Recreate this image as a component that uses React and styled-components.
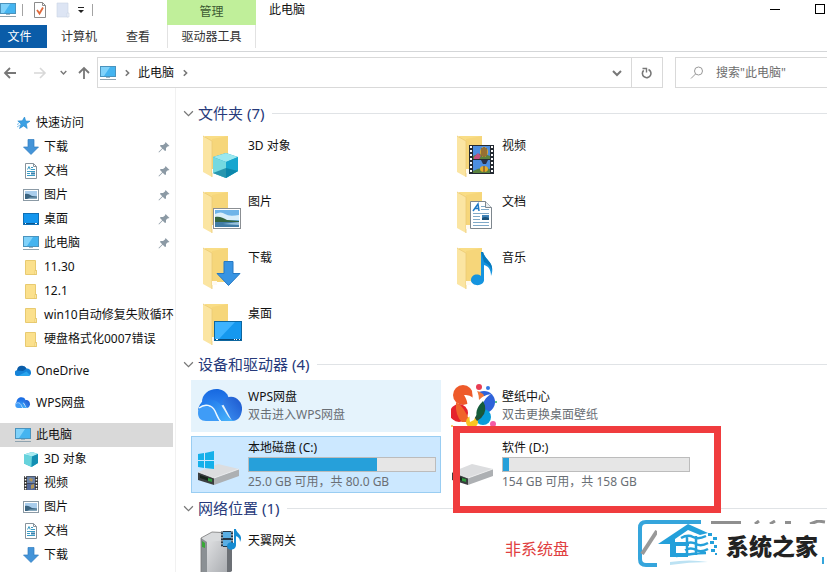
import React from "react";
import styled, { createGlobalStyle } from "styled-components";

const GlobalStyle = createGlobalStyle`
  * {
    box-sizing: border-box;
  }
  body {
    margin: 0;
    background: #fff;
    color: #111;
    font: 12px/18px "Noto Sans", "Noto Sans CJK SC", sans-serif;
  }
  button,
  input {
    font: inherit;
    color: inherit;
    border: 0;
    padding: 0;
    background: none;
  }
  a {
    color: inherit;
    text-decoration: none;
  }
  svg {
    display: block;
    flex: none;
  }
`;

const Window = styled.div`
  position: relative;
  display: flex;
  flex-direction: column;
  height: 100vh;
  overflow: hidden;
`;

/* ---------- header ---------- */

const Ribbon = styled.header`
  display: flex;
  align-items: stretch;
  height: 52px;
  border-bottom: 1px solid #d4d6d8;
`;

const RibbonLeft = styled.div`
  display: flex;
  flex-direction: column;
  width: 167px;
`;

const QuickBar = styled.div`
  display: flex;
  align-items: center;
  height: 25px;
  padding-bottom: 6px;
`;

const QuickButton = styled.button`
  width: ${(p) => p.$width || 22}px;
  display: flex;
  justify-content: ${(p) => p.$align || "center"};
`;

const Separator = styled.span`
  width: 1px;
  height: 12px;
  background: #a3a3a3;
`;

const Tabs = styled.div`
  display: flex;
  height: 23px;
`;

const Tab = styled.button`
  width: ${(p) => p.$width}px;
  height: 23px;
  padding: 1px 0 0;
  background: ${(p) => (p.$active ? "#0a5ca8" : "transparent")};
  color: ${(p) => (p.$active ? "#fff" : "#333")};
  text-align: center;
  white-space: nowrap;
`;

const FileTab = styled(Tab)`
  padding-right: 8px;
`;

const ToolTab = styled.div`
  display: flex;
  flex-direction: column;
  width: 89px;
`;

const ToolTitle = styled.div`
  height: 25px;
  padding-top: 3px;
  background: #c0ef9a;
  color: #3c5a32;
  text-align: center;
`;

const ToolButton = styled(Tab)`
  width: auto;
  border: solid #e2e2e2;
  border-width: 0 1px;
`;

const Title = styled.h1`
  flex: 1;
  margin: 0;
  padding: 1px 13px;
  font-size: 12px;
  line-height: 18px;
  font-weight: 400;
`;

const WindowButtons = styled.div`
  display: flex;
  align-items: flex-start;
  gap: 35px;
  padding: 4px 2px;
`;

const NavBar = styled.nav`
  display: flex;
  align-items: center;
  padding-top: 5px;
  height: 36px;
`;

const NavButtons = styled.div`
  display: flex;
  align-items: center;
  justify-content: space-between;
  width: 97px;
  padding: 0 6px 0 3px;
`;

const NavButton = styled.button`
  display: flex;
`;

const NavPair = styled.div`
  display: flex;
  align-items: center;
  gap: ${(p) => p.$gap}px;
`;

const AddressBar = styled.div`
  display: flex;
  align-items: center;
  flex: 1;
  height: 31px;
  border: 1px solid #d9d9d9;
  padding-left: 2px;
`;

const Crumbs = styled.div`
  display: flex;
  align-items: center;
  flex: 1;
  gap: 7px;
`;

const AddressButton = styled.button`
  display: flex;
  align-items: center;
  justify-content: center;
  width: ${(p) => (p.$divided ? 31 : 29)}px;
  height: 29px;
  border-left: ${(p) => (p.$divided ? "1px solid #d9d9d9" : "0")};
`;

const SearchBox = styled.label`
  display: flex;
  align-items: center;
  gap: 12px;
  width: 152px;
  height: 31px;
  margin-left: 12px;
  padding-left: 14px;
  border: 1px solid #d9d9d9;
  border-right: 0;
`;

const SearchInput = styled.input`
  flex: 1;
  min-width: 0;
  outline: none;
  &::placeholder {
    color: #6d6d6d;
    opacity: 1;
  }
`;

/* ---------- side tree ---------- */

const Main = styled.div`
  display: flex;
  flex: 1;
  min-height: 0;
`;

const Sidebar = styled.aside`
  width: 176px;
  padding: 23px 2px 0 0;
  border-right: 1px solid #f1f1f1;
  overflow: hidden;
`;

const TreeGroup = styled.div`
  margin-bottom: 8px;
`;

const TreeLink = styled.a`
  display: flex;
  align-items: center;
  gap: 5px;
  height: 24px;
  padding: 0 3px 1px ${(p) => (p.$root ? 15 : 23)}px;
  background: ${(p) => (p.$selected ? "#d9d9d9" : "transparent")};
  white-space: nowrap;
`;

const TreeText = styled.span`
  flex: 1;
`;

/* ---------- content ---------- */

const Content = styled.main`
  flex: 1;
  min-width: 0;
  padding: 14px 0 0 7px;
`;

const SectionTitle = styled.h2`
  display: flex;
  align-items: center;
  gap: 4px;
  height: 22px;
  margin: 0 0 5px;
  color: #26397a;
  font-size: 15px;
  font-weight: 400;
  &::after {
    content: "";
    flex: 1;
    height: 1px;
    margin-left: 4px;
    background: #e0e3e6;
  }
`;

const Tiles = styled.div`
  display: grid;
  grid-template-columns: repeat(auto-fill, 250px);
  gap: 4px;
  padding-left: 8px;
  margin-bottom: 4px;
`;

const Tile = styled.a`
  position: relative;
  display: flex;
  gap: 3px;
  height: ${(p) => (p.$drive ? 57 : 52)}px;
  padding: ${(p) => (p.$drive ? 2 : 7)}px 4px 0 5px;
  border: 1px solid ${(p) => (p.$selected ? "#99cdf2" : "transparent")};
  background: ${(p) =>
    p.$selected ? "#cce8ff" : p.$hover ? "#e5f3fc" : "transparent"};
`;

const TileIcon = styled.span`
  flex: none;
  width: 48px;
  height: 48px;
  margin-top: ${(p) => (p.$drive ? 3 : -6)}px;
`;

const TileText = styled.div`
  flex: 1;
  min-width: 0;
`;

const Muted = styled.div`
  color: #6a6f75;
  white-space: nowrap;
`;

const Meter = styled.div`
  height: 15px;
  margin-bottom: 1px;
  border: 1px solid #bcbcbc;
  background: #e6e6e6;
`;

const MeterFill = styled.div`
  height: 13px;
  background: #26a0da;
`;

const Callout = styled.div`
  position: absolute;
  top: -11px;
  right: -27px;
  bottom: -21px;
  left: 7px;
  border: 7px solid #f03c3e;
`;

const CalloutText = styled.div`
  position: absolute;
  top: 106px;
  left: 45px;
  color: #e04040;
  font-size: 16px;
  line-height: 20px;
  white-space: nowrap;
`;

const Watermark = styled.div`
  position: absolute;
  right: 0;
  bottom: 4px;
  width: 190px;
  height: 48px;
`;

const WatermarkCard = styled.div`
  position: absolute;
  top: 4px;
  left: 20px;
  right: 5px;
  bottom: 0;
  display: flex;
  align-items: center;
  background: #fff;
`;

const Brand = styled.strong`
  color: #222;
  font-size: 23px;
  line-height: 30px;
  font-weight: 900;
  white-space: nowrap;
`;

/* ---------- small icons ---------- */

const Svg = ({ size = 16, box = 16, children }) => (
  <svg width={size} height={size} viewBox={`0 0 ${box} ${box}`} aria-hidden="true">
    {children}
  </svg>
);

const PcIcon = () => (
  <Svg>
    <rect x=".5" y="1.500" width="15" height="10" fill="#44b4f0" stroke="#4a93bd" />
    <path d="M1 2h9L4 11H1z" fill="#80d2fa" />
    <path d="M6 12h4v1H6z" fill="#9cb6c4" />
    <path d="M0 14.500h16" stroke="#8fa3af" />
  </Svg>
);

const StarIcon = () => (
  <Svg>
    <path d="M9.500 2l1.200 4 4.300.2-3.700 2.600.9 4.700-3.500-2.600-4.200 2.600 1.500-4.600L2.800 6l4.500-.2z" fill="#3aa0e4" stroke="#2287cc" strokeWidth=".6" />
    <path d="M2 12l3-2M2 9.500l2-1" stroke="#7fc1ee" />
  </Svg>
);

const DownIcon = () => (
  <Svg>
    <path d="M5 .5h6V8h4.500L8 15.500.5 8H5z" fill="#4494d8" stroke="#2f7cc0" strokeWidth=".7" />
  </Svg>
);

const DocIcon = () => (
  <Svg>
    <path d="M2.500.5h8l3 3v12h-11z" fill="#fff" stroke="#87939c" />
    <path d="M10.500.5v3h3" fill="none" stroke="#87939c" />
    <path d="M4.500 6.500L6 3.500l1.200 3M8 4.500h2M8 6.500h4M4 8.500h8M4 10.500h3M4 12.500h8" stroke="#3a9bc4" fill="none" />
    <path d="M8 9.500h4v2H8z" fill="#3a82b0" />
  </Svg>
);

const PictureIcon = () => (
  <Svg>
    <rect x=".5" y="2.500" width="15" height="11" fill="#fff" stroke="#8b9aa5" />
    <path d="M2 4h12v8H2z" fill="#a9cdec" />
    <path d="M2 7c3-1 5 1 7 2l5 .5V12H2z" fill="#3b6480" />
    <path d="M7 10.500h7V12H4z" fill="#87a9be" />
  </Svg>
);

const DesktopIcon = () => (
  <Svg>
    <rect x=".5" y="2.500" width="15" height="11" fill="#1496ee" stroke="#0f6fb5" />
    <path d="M1 12.500h14" stroke="#0b568e" />
    <path d="M2 12.500h1M12 12.500h2" stroke="#fff" />
  </Svg>
);

const FolderIcon = () => (
  <Svg>
    <path d="M2.500 1.500h10v10h1v4h-11z" fill="#fbe08c" stroke="#e8ca70" />
    <path d="M12 11.500h1.500v4H12z" fill="#fff0b8" stroke="#dcb850" strokeWidth=".5" />
  </Svg>
);

const CloudIcon = () => (
  <Svg>
    <path d="M3 13a3 3 0 01-.5-6A5 5 0 0111.500 5.500 4 4 0 0116 9.500 3 3 0 0113 13z" fill="#1583d8" />
    <path d="M2 7.500A5 5 0 0111.500 5.500L8 8z" fill="#0a5ca8" />
    <path d="M3 13l8.500-4.500L15 12q-1 1-2 1z" fill="#29a5ee" />
  </Svg>
);

const CubeIcon = () => (
  <Svg>
    <path d="M1 3.500L9 1l6 2v9l-6.500 4L1 12.500z" fill="#35b5cf" />
    <path d="M1 3.500L9 1l6 2-6 2.500z" fill="#a8ebf1" />
    <path d="M1 3.500l8 2-.5 10.500L1 12.500z" fill="#67d3dc" />
    <path d="M9 5.500L15 3v9l-6.500 4z" fill="#128fb3" />
  </Svg>
);

const VideoIcon = () => (
  <Svg>
    <path d="M1 1h14v14H1z" fill="#333" />
    <path d="M4 1.500h8V8H4z" fill="#6981a8" />
    <path d="M4 8.500h8V15H4z" fill="#52689a" />
    <path d="M7 3l3 1-1 3-3-2zM8 10l3-1v4l-3 1z" fill="#b49758" />
    <path d="M2.500 1v14M13.500 1v14" stroke="#fff" strokeWidth="1.500" strokeDasharray="1.500 1.500" />
  </Svg>
);

const PinIcon = () => (
  <Svg size={12} box={12}>
    <path d="M7.500 1l4 4-2 .5L8 7v2.500l-1 .5-2.300-2.300L1 11.500l-.5-.5 3.700-3.800L2 5l.5-1H5l2-1.500z" fill="#8c9aa5" />
  </Svg>
);

const WpsCloud = ({ size = 48 }) => (
  <Svg size={size} box={48}>
    <defs>
      <linearGradient id="wpsBack" x1="0" y1="0" x2="0" y2="1">
        <stop offset="0" stopColor="#1668e0" />
        <stop offset="1" stopColor="#2f86f2" />
      </linearGradient>
      <linearGradient id="wpsBand" x1="0" y1="0" x2="1" y2="1">
        <stop offset="0" stopColor="#1d74ea" />
        <stop offset="1" stopColor="#4ab6fc" />
      </linearGradient>
      <linearGradient id="wpsSide" x1="1" y1="0" x2="0" y2="1">
        <stop offset="0" stopColor="#1c55cc" />
        <stop offset="1" stopColor="#3d95f5" />
      </linearGradient>
    </defs>
    <path d="M5 21C4 6 26 2 31 14l2 6-14 6z" fill="url(#wpsBack)" />
    <path d="M25 20C33 9 46 17 45 28c-1 7-4 11-10 11z" fill="url(#wpsSide)" />
    <path d="M1 30C1 17 15 14 22 23c5 6 7 14 14 16H25c-6-2-7-14-14-16-5 0-9 3-10 7z" fill="url(#wpsBand)" />
    <path d="M4 21c10-6 17-3 22 5 4 6 6 12 12 13H24L12 23z" fill="url(#wpsBand)" />
    <path d="M1 31c0-9 12-10 16-3 2 4 3 8 6 11H9c-5 0-8-3-8-8z" fill="#3f9cf7" />
    <path d="M2 26c6-5 13-3 16 3 2 4 3 8 6 11" fill="none" stroke="#eff8ff" strokeWidth="1.500" />
  </Svg>
);

/* ---------- large icons ---------- */

const FolderLarge = ({ children }) => (
  <Svg size={48} box={48}>
    <path d="M8 5h23v34H14z" fill="#f9dd86" />
    <path d="M15 8l16-3v34H15z" fill="#f6d67a" />
    <path d="M6 5l9 5v36l-9-5z" fill="#fbe5a2" />
    <path d="M6 5l9 5v36" fill="none" stroke="#ecca74" strokeWidth=".8" />
    <path d="M15 38h5v4h-5z" fill="#fffaf0" />
    {children}
  </Svg>
);

const CubeLarge = () => (
  <FolderLarge>
    <path d="M16 26l13-4 12 4v14l-12 7-13-5z" fill="#1fa7c5" />
    <path d="M16 26l13-4 12 4-12 5z" fill="#9be8ef" />
    <path d="M16 26l13 5v16l-13-5z" fill="#74d9e0" />
    <path d="M29 31l12-5v14l-12 7z" fill="#16a6cf" />
    <path d="M16 42l13-5 12 3-12 7z" fill="#08799a" opacity=".7" />
  </FolderLarge>
);

const PictureLarge = () => (
  <FolderLarge>
    <rect x="16.500" y="21.500" width="27" height="20" fill="#fff" stroke="#8b8f93" />
    <path d="M18 23h24v17H18z" fill="#6fb4e8" />
    <path d="M18 27q6-3 10 0t14 1v5H18z" fill="#d9eefa" />
    <path d="M18 30c5-1 8 1 12 3l12 1v2H18z" fill="#35653f" />
    <path d="M18 35h24v5H18z" fill="#417ca5" />
    <path d="M26 37l16-2v3z" fill="#9bc4dd" />
  </FolderLarge>
);

const DownLarge = () => (
  <FolderLarge>
    <path d="M27 18.500h9v12h7L31.500 42.500 20 30.500h7z" fill="#3894e3" stroke="#2679c3" />
  </FolderLarge>
);

const DesktopLarge = () => (
  <FolderLarge>
    <rect x="17.500" y="22.500" width="27" height="19" fill="#1598ef" stroke="#0d669f" />
    <path d="M18 23h20L22 40h-4z" fill="#3db3ff" />
    <path d="M18 40.500h26" stroke="#084b7e" />
    <path d="M19 40.500h2M37 40.500h1M39 40.500h1M42 40.500h1" stroke="#fff" />
  </FolderLarge>
);

const VideoLarge = () => (
  <FolderLarge>
    <path d="M18 14h25v29H18z" fill="#242a32" />
    <path d="M22 15h17v13H22zM22 29h17v13H22z" fill="#4c8ee0" />
    <path d="M22 25q8-5 17 0v3H22zM22 40q8-5 17-2v4H22z" fill="#5a813e" />
    <path d="M23 26l4-4 3 3-2 3h-5z" fill="#c44f80" />
    <ellipse cx="33" cy="21" rx="4" ry="5" fill="#dca52a" />
    <path d="M33 16v10M31 17v8M35 17v8" stroke="#503b3c" />
    <path d="M30 29h7l-2 4h-3z" fill="#29314c" />
    <ellipse cx="33" cy="38" rx="4" ry="3" fill="#e6ad29" />
    <path d="M33 35v6" stroke="#503b3c" />
    <path d="M20 15v28M41 15v28" stroke="#fff" strokeWidth="2" strokeDasharray="2 2" />
  </FolderLarge>
);

const DocLarge = () => (
  <FolderLarge>
    <path d="M19.500 14.500h15l6 6v21h-21z" fill="#fff" stroke="#7e878e" />
    <path d="M34.500 14.500v6h6" fill="#e9edf0" stroke="#7e878e" />
    <path d="M22 24l5-7 1 7M24 21.500h4" stroke="#1f79c5" fill="none" strokeWidth="1.500" />
    <path d="M30 19.500h4M30 22.500h8M22 26.500h16M22 29.500h7M22 32.500h7M22 35.500h16M22 38.500h16" stroke="#7fa9c8" />
    <path d="M31 28h7v5h-7z" fill="#4183b7" />
    <path d="M31 31q3-2 7 0v2h-7z" fill="#1c5279" />
  </FolderLarge>
);

const MusicLarge = () => (
  <FolderLarge>
    <path d="M30 9h2c2 8 13 11 8 24 0-7-3-10-7-11v14c1 8-13 8-13 1 0-5 6-7 10-4z" fill="#1594df" />
    <path d="M30 9h2c2 8 10 10 9 18-2-5-6-7-8-8z" fill="#087abd" />
  </FolderLarge>
);

const DriveLarge = ({ windows }) => (
  <Svg size={48} box={48}>
    <path d="M1 30l20-8 21 5-25 9z" fill="#dcdddf" />
    <path d="M1 30l16 6v7L1 38z" fill="#3b3e40" />
    <path d="M17 36l25-9v7l-25 9z" fill="#adb0b3" />
    <path d="M1 30l16 6 25-9" fill="none" stroke="#f3f3f3" strokeWidth=".8" />
    <path d="M3 33l12 4v3L3 36z" fill="#17231b" />
    <path d="M11 36l4 1v3l-4-1z" fill="#2f9a3e" />
    {windows && (
      <path d="M1 12l6-1v7H1zm7-1l9-2v9H8zm-7 8h6v7l-6-1zm7 0h9v8l-9-1z" fill="#15b0ea" />
    )}
  </Svg>
);

const WallpaperLarge = () => (
  <Svg size={48} box={48}>
    <circle cx="12" cy="13" r="10" fill="#ee5a2a" />
    <circle cx="33" cy="20" r="11" fill="#2e62d9" />
    <circle cx="8" cy="31" r="9" fill="#e5232c" />
    <path d="M5 20q8 4 14 20h-8Q4 34 5 20z" fill="#f0642a" />
    <circle cx="32" cy="35" r="8" fill="#079dda" />
    <circle cx="21" cy="40" r="6" fill="#fac421" />
    <path d="M23 8q11 2 11 10l-9 2z" fill="#f0763a" />
    <path d="M22 22q9-6 12 2 2 9-8 15-5-6-4-17z" fill="#24503a" />
    <path d="M13 13c5 0 7 1 9 3-1-5-1-10 0-14 4 5 6 10 6 16 4-4 7-5 12-6-6 4-8 8-9 13-2 6-6 7-8 13l-4 2c-1-4 0-7-1-11-2-6-1-10-5-16z" fill="#fff" />
    <path d="M26 36c-2-7 1-12 6-17 4 7 1 14-6 17z" fill="#145c3b" />
    <circle cx="28" cy="5" r="3" fill="#e83d53" />
    <circle cx="37" cy="6" r="2" fill="#3379e4" />
    <circle cx="45" cy="20" r="1" fill="#2aae6d" />
    <circle cx="42" cy="42" r="3" fill="#f45ba5" />
    <circle cx="1" cy="44" r="1" fill="#f8b739" />
  </Svg>
);

const NetworkLarge = () => (
  <Svg size={48} box={48}>
    <defs>
      <linearGradient id="deviceFace" x1="0" y1="0" x2="1" y2="1">
        <stop offset="0" stopColor="#dfe0e2" />
        <stop offset="1" stopColor="#a9acb0" />
      </linearGradient>
    </defs>
    <path d="M4 12L15 6l20 1v38l-4 3H4z" fill="#d9dbdd" />
    <path d="M10 16l20-2v34H10z" fill="url(#deviceFace)" />
    <path d="M4 12l6 4v32H4z" fill="#8b9094" />
    <path d="M30 14l5-5v36l-5 3z" fill="#6c7075" />
    <path d="M4 48V12L15 6l20 1" fill="none" stroke="#777" strokeWidth=".8" />
    <path d="M5 15l3 2v5l-3-1z" fill="#38a936" />
    <path d="M24 5h12v16H24z" fill="#263848" />
    <path d="M26 6h8v6h-8zM26 14h8v6h-8z" fill="#59aee4" />
    <path d="M25 5v16M35 5v16" stroke="#fff" strokeDasharray="1.500 1.500" />
    <path d="M37 3h2c0 4 8 6 4 13 0-4-2-5-4-6v9c0 6-9 6-9 1 0-3 4-5 7-3z" fill="#168bd1" />
  </Svg>
);

const Chevron = ({ dir = "right", color = "#777", size = 10, weight = 1.5 }) => (
  <Svg size={size} box={10}>
    <path d={dir === "right" ? "M3.500 1.500L7 5 3.500 8.500" : "M1 3l4 4 4-4"} fill="none" stroke={color} strokeWidth={weight} />
  </Svg>
);

/* ---------- data ---------- */

const quickLinks = [
  { name: "下载", icon: <DownIcon />, pinned: true },
  { name: "文档", icon: <DocIcon />, pinned: true },
  { name: "图片", icon: <PictureIcon />, pinned: true },
  { name: "桌面", icon: <DesktopIcon />, pinned: true },
  { name: "此电脑", icon: <PcIcon />, pinned: true },
  { name: "11.30", icon: <FolderIcon /> },
  { name: "12.1", icon: <FolderIcon /> },
  { name: "win10自动修复失败循环", icon: <FolderIcon /> },
  { name: "硬盘格式化0007错误", icon: <FolderIcon /> },
];

const pcLinks = [
  { name: "3D 对象", icon: <CubeIcon /> },
  { name: "视频", icon: <VideoIcon /> },
  { name: "图片", icon: <PictureIcon /> },
  { name: "文档", icon: <DocIcon /> },
  { name: "下载", icon: <DownIcon /> },
];

const folders = [
  { name: "3D 对象", icon: <CubeLarge /> },
  { name: "视频", icon: <VideoLarge /> },
  { name: "图片", icon: <PictureLarge /> },
  { name: "文档", icon: <DocLarge /> },
  { name: "下载", icon: <DownLarge /> },
  { name: "音乐", icon: <MusicLarge /> },
  { name: "桌面", icon: <DesktopLarge /> },
];

const TreeItem = ({ name, icon, pinned, ...rest }) => (
  <TreeLink href="#" {...rest}>
    {icon}
    <TreeText>{name}</TreeText>
    {pinned && <PinIcon />}
  </TreeLink>
);

const Section = ({ title, children }) => (
  <section>
    <SectionTitle>
      <Chevron dir="down" size={11} weight={1.1} />
      {title}
    </SectionTitle>
    <Tiles>{children}</Tiles>
  </section>
);

const Item = ({ name, note, icon, $hover }) => (
  <Tile href="#" $hover={$hover}>
    <TileIcon>{icon}</TileIcon>
    <TileText>
      {name}
      {note && <Muted>{note}</Muted>}
    </TileText>
  </Tile>
);

const Drive = ({ name, note, used, windows, $selected, children }) => (
  <Tile href="#" $drive $selected={$selected}>
    <TileIcon $drive>
      <DriveLarge windows={windows} />
    </TileIcon>
    <TileText>
      {name}
      <Meter>
        <MeterFill style={{ width: `${used}%` }} />
      </Meter>
      <Muted>{note}</Muted>
    </TileText>
    {children}
  </Tile>
);

const Header = () => (
  <>
    <Ribbon>
      <RibbonLeft>
        <QuickBar>
          <QuickButton aria-label="此电脑" $align="flex-start">
            <PcIcon />
          </QuickButton>
          <Separator />
          <QuickButton aria-label="属性" $width={34}>
            <Svg>
              <path d="M2.500.5h8l3 3v12h-11z" fill="#fff" stroke="#8b8b8b" />
              <path d="M10.500.5v3h3" fill="none" stroke="#8b8b8b" />
              <path d="M5 8l2.500 3.500L11 5.500" fill="none" stroke="#e06a3c" strokeWidth="1.800" />
            </Svg>
          </QuickButton>
          <QuickButton aria-label="新建文件夹" $width={12}>
            <Svg>
              <path d="M2 1h11v14H2z" fill="#dde5f4" stroke="#cad3e4" strokeWidth=".6" />
              <path d="M12 11h2v4h-2z" fill="#eef2fa" stroke="#cad3e4" strokeWidth=".6" />
            </Svg>
          </QuickButton>
          <QuickButton aria-label="自定义快速访问工具栏" $width={23}>
            <Svg size={8} box={8}>
              <path d="M1 1.500h6" stroke="#222" />
              <path d="M1 4h6L4 7z" fill="#222" />
            </Svg>
          </QuickButton>
          <Separator />
        </QuickBar>
        <Tabs>
          <FileTab $width={47} $active>
            文件
          </FileTab>
          <Tab $width={64}>计算机</Tab>
          <Tab $width={54}>查看</Tab>
        </Tabs>
      </RibbonLeft>
      <ToolTab>
        <ToolTitle>管理</ToolTitle>
        <ToolButton>驱动器工具</ToolButton>
      </ToolTab>
      <Title>此电脑</Title>
      <WindowButtons>
        <button aria-label="最小化">
          <Svg size={10} box={10}>
            <path d="M0 5.500h10" stroke="#000" />
          </Svg>
        </button>
        <button aria-label="最大化">
          <Svg size={10} box={10}>
            <rect x=".5" y=".5" width="9" height="9" fill="none" stroke="#000" />
          </Svg>
        </button>
      </WindowButtons>
    </Ribbon>
    <NavBar>
      <NavButtons>
        <NavPair $gap={16}>
          <NavButton aria-label="后退">
            <Svg size={14} box={14}>
              <path d="M13 7H2M7 2L2 7l5 5" fill="none" stroke="#777" strokeWidth="1.800" />
            </Svg>
          </NavButton>
          <NavButton aria-label="前进">
            <Svg size={14} box={14}>
              <path d="M1 7h11M7 2l5 5-5 5" fill="none" stroke="#d8d8d8" strokeWidth="1.600" />
            </Svg>
          </NavButton>
        </NavPair>
        <NavPair $gap={10}>
          <NavButton aria-label="最近浏览的位置">
            <Chevron dir="down" size={7} weight={2} />
          </NavButton>
          <NavButton aria-label="上移">
            <Svg size={14} box={14}>
              <path d="M7 13V2M2 7l5-5 5 5" fill="none" stroke="#777" strokeWidth="1.800" />
            </Svg>
          </NavButton>
        </NavPair>
      </NavButtons>
      <AddressBar>
        <Crumbs>
          <PcIcon />
          <Chevron size={8} weight={2} />
          <span>此电脑</span>
          <Chevron size={8} weight={2} />
        </Crumbs>
        <AddressButton aria-label="历史记录">
          <Chevron dir="down" weight={2} />
        </AddressButton>
        <AddressButton aria-label="刷新" $divided>
          <Svg size={12} box={12}>
            <path d="M7.500 2.500a4.300 4.300 0 11-4.800.8" fill="none" stroke="#777" strokeWidth="1.600" />
            <path d="M1.500 1.500h4v4" fill="none" stroke="#777" strokeWidth="1.400" />
          </Svg>
        </AddressButton>
      </AddressBar>
      <SearchBox>
        <Svg size={14} box={14}>
          <circle cx="8.500" cy="5" r="4" fill="none" stroke="#999" />
          <path d="M5.500 8L1 12.500" stroke="#999" />
        </Svg>
        <SearchInput type="text" aria-label="搜索" placeholder={'搜索"此电脑"'} />
      </SearchBox>
    </NavBar>
  </>
);

const App = () => {
  return (
    <Window>
      <GlobalStyle />
      <Header />
      <Main>
        <Sidebar>
          <TreeGroup>
            <TreeItem $root name="快速访问" icon={<StarIcon />} />
            {quickLinks.map((link) => (
              <TreeItem key={link.name} {...link} />
            ))}
          </TreeGroup>
          <TreeGroup>
            <TreeItem $root name="OneDrive" icon={<CloudIcon />} />
          </TreeGroup>
          <TreeGroup>
            <TreeItem $root name="WPS网盘" icon={<WpsCloud size={16} />} />
          </TreeGroup>
          <TreeGroup>
            <TreeItem $root $selected name="此电脑" icon={<PcIcon />} />
            {pcLinks.map((link) => (
              <TreeItem key={link.name} {...link} />
            ))}
          </TreeGroup>
        </Sidebar>
        <Content>
          <Section title="文件夹 (7)">
            {folders.map((folder) => (
              <Item key={folder.name} {...folder} />
            ))}
          </Section>
          <Section title="设备和驱动器 (4)">
            <Item $hover name="WPS网盘" note="双击进入WPS网盘" icon={<WpsCloud />} />
            <Item name="壁纸中心" note="双击更换桌面壁纸" icon={<WallpaperLarge />} />
            <Drive $selected windows name="本地磁盘 (C:)" note="25.0 GB 可用，共 80.0 GB" used={69} />
            <Drive name="软件 (D:)" note="154 GB 可用，共 158 GB" used={3}>
              <Callout>
                <CalloutText>非系统盘</CalloutText>
              </Callout>
            </Drive>
          </Section>
          <Section title="网络位置 (1)">
            <Item name="天翼网关" icon={<NetworkLarge />} />
          </Section>
        </Content>
      </Main>
      <Watermark>
        <svg width="190" height="48" viewBox="0 0 190 48" aria-hidden="true">
          <path d="M64 2H9Q3 2 3 8v31q0 6 6 6h50" fill="none" stroke="#35a5dc" strokeWidth="4" />
          <path d="M5 34L20 11" stroke="#999" strokeWidth="4" />
          <path d="M74 2.500h30M118 4l4-3M133 4l5-3M148 2.500h6M173 4l8-3 7 1" fill="none" stroke="#8f8f8f" strokeWidth="3" />
          <path d="M186 37v7" stroke="#35a5dc" strokeWidth="2" />
        </svg>
        <WatermarkCard>
          <svg width="69" height="44" viewBox="0 0 69 44" aria-hidden="true">
            <path d="M1 20L31 0l20 9-8 2-12-5-13 9v3h14v4H19v7h12v4H13V20z" fill="#24a0da" />
            <path d="M24 14q7-4 12-1t13-1M28 20q6-3 11 0t12-1M28 26q6-3 11 0t12-1M19 32q10-1 16-2t14-1M30 12v20M39 12v19" fill="none" stroke="#24a0da" strokeWidth="2.500" />
            <path d="M51 9h4v3h-4zM56 13h4v3h-4zM53 17h4v3h-4zM57 21h3v3h-3zM54 25h4v3h-4zM58 29h2v2h-2z" fill="#24a0da" />
            <path d="M13 38q19-3 38 0-19 0-38 3z" fill="#bce2f3" />
          </svg>
          <Brand>系统之家</Brand>
        </WatermarkCard>
      </Watermark>
    </Window>
  );
};

export default App;
